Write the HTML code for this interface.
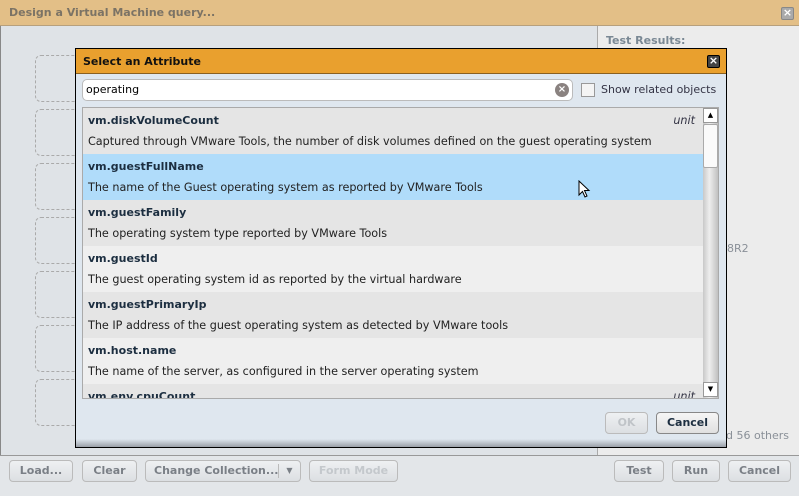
<!DOCTYPE html>
<html><head><style>
*{box-sizing:border-box;margin:0;padding:0}
body{width:799px;height:496px;position:relative;overflow:hidden;font-family:"DejaVu Sans","Liberation Sans",sans-serif;font-size:11px;background:#dfe3e7}
.a{position:absolute}
.win{left:0;top:0;width:799px;height:496px;border:1px solid #888;background:#dfe3e7}
.tb{left:0;top:0;width:799px;height:26px;background:#e3bf87;border-bottom:1px solid #b7a07d;color:#7b7365;font-weight:bold;font-size:11px;padding:6px 9px}
.x{width:13px;height:13px;border:1px solid #666;background:#ddd;border-radius:2px;font-size:11px;line-height:10px;text-align:center;color:#fff;font-weight:bold}
.right{left:597px;top:26px;width:202px;height:429px;background:#ececec;border-left:1px solid #aaa}
.dash{left:35px;width:60px;height:47px;border:1px dashed #aaa;border-radius:6px}
.bot{left:0;top:455px;width:799px;height:41px;background:#e3e6e9;border-top:1px solid #999}
.btn{height:22px;border:1px solid #bbb;border-radius:4px;background:linear-gradient(#eef0f2,#dcdfe2);color:#7a7f86;font-weight:bold;font-size:11px;text-align:center;line-height:20px}
.dlg{left:75px;top:48px;width:652px;height:400px;border:1px solid #000;background:#dfe7ef}
.dt{left:0;top:0;width:650px;height:25px;background:#e9a02e;border-bottom:1px solid #8a6020;font-weight:bold;font-size:11px;padding:6px 7px;color:#111}
.inp{left:6px;top:30px;width:491px;height:22px;background:#fff;border:1px solid #bbb;border-radius:5px;padding:3px 3px;font-size:11px}
.list{left:6px;top:58px;width:637px;height:292px;border:1px solid #aaa;overflow:hidden;background:#e5e5e5}
.row{position:absolute;left:0;width:620px;height:46px;padding:6px 5px;color:#222;font-size:11.2px}
.row b{display:block;color:#1c2e40;margin-bottom:8px;font-size:11px}
.u{position:absolute;right:8px;top:6px;font-style:italic;color:#334}
</style></head><body>
<div class="a win"></div>
<div class="a tb">Design a Virtual Machine query...</div>
<div class="a x" style="left:781px;top:7px;background:#aaa;border-color:#888">×</div>
<div class="a right"><div style="position:absolute;left:8px;top:8px;color:#7a8894;font-weight:bold;font-size:11px">Test Results:</div>
<div style="position:absolute;left:122px;top:216px;color:#8a9098">08R2</div>
<div style="position:absolute;left:128px;top:403px;color:#8a9098;font-size:11px">d 56 others</div></div>
<div class="a dash" style="top:55px"></div><div class="a dash" style="top:109px"></div><div class="a dash" style="top:163px"></div><div class="a dash" style="top:217px"></div><div class="a dash" style="top:271px"></div><div class="a dash" style="top:325px"></div><div class="a dash" style="top:379px"></div>
<div class="a bot"></div>
<div class="a btn" style="left:9px;top:460px;width:64px">Load...</div>
<div class="a btn" style="left:82px;top:460px;width:55px">Clear</div>
<div class="a btn" style="left:145px;top:460px;width:156px;text-align:left;padding-left:8px">Change Collection...<span style="position:absolute;left:132px;top:3px;height:14px;border-left:1px solid #bbb;width:22px;text-align:center;line-height:14px;font-size:8px">▼</span></div>
<div class="a btn" style="left:309px;top:460px;width:89px;color:#c4c8cc">Form Mode</div>
<div class="a btn" style="left:614px;top:460px;width:50px">Test</div>
<div class="a btn" style="left:672px;top:460px;width:48px">Run</div>
<div class="a btn" style="left:728px;top:460px;width:63px">Cancel</div>

<div class="a dlg">
<div class="a dt">Select an Attribute</div>
<div class="a x" style="left:631px;top:6px;background:#444;border-color:#000">×</div>
<div class="a inp">operating</div>
<div class="a" style="left:479px;top:34px;width:14px;height:14px;border-radius:7px;background:#8a8280;color:#fff;font-size:10px;line-height:14px;text-align:center;font-weight:bold">×</div>
<div class="a" style="left:505px;top:34px;width:14px;height:14px;border:1px solid #999;background:#f4f4f4"></div>
<div class="a" style="left:525px;top:34px;font-size:11px;color:#334">Show related objects</div>
<div class="a list">
<div class="row" style="top:0;background:#e5e5e5"><b>vm.diskVolumeCount</b>Captured through VMware Tools, the number of disk volumes defined on the guest operating system<span class="u">unit</span></div>
<div class="row" style="top:46px;background:#b0dcfa"><b>vm.guestFullName</b>The name of the Guest operating system as reported by VMware Tools</div>
<div class="row" style="top:92px;background:#e5e5e5"><b>vm.guestFamily</b>The operating system type reported by VMware Tools</div>
<div class="row" style="top:138px;background:#efefef"><b>vm.guestId</b>The guest operating system id as reported by the virtual hardware</div>
<div class="row" style="top:184px;background:#e5e5e5"><b>vm.guestPrimaryIp</b>The IP address of the guest operating system as detected by VMware tools</div>
<div class="row" style="top:230px;background:#efefef"><b>vm.host.name</b>The name of the server, as configured in the server operating system</div>
<div class="row" style="top:276px;background:#e5e5e5"><b>vm.env.cpuCount</b><span class="u">unit</span></div>
<div class="a" style="left:620px;top:0;width:16px;height:290px;background:linear-gradient(90deg,#c8c8c8,#eee 40%,#bbb)"></div>
<div class="a" style="left:620px;top:0;width:15px;height:15px;background:#fff;border:1px solid #999;font-size:7px;text-align:center;line-height:13px">▲</div>
<div class="a" style="left:620px;top:16px;width:15px;height:44px;background:#fafafa;border:1px solid #aaa;border-radius:2px"></div>
<div class="a" style="left:620px;top:274px;width:15px;height:15px;background:#fff;border:1px solid #999;font-size:7px;text-align:center;line-height:13px">▼</div>
</div>
<svg class="a" style="left:502px;top:131px" width="13" height="20"><path d="M1 1 L1 15 L4.5 11.5 L7 17 L9 16 L6.5 10.5 L11 10.5 Z" fill="#fff" stroke="#000" stroke-width="1"/></svg>
<div class="a btn" style="left:529px;top:363px;width:43px;color:#c0c4c8">OK</div>
<div class="a btn" style="left:580px;top:363px;width:63px;color:#1c2e40;border-color:#888;background:linear-gradient(#f6f6f6,#e0e0e0)">Cancel</div>
<div class="a" style="left:0;top:390px;width:650px;height:8px;background:linear-gradient(#dfe7ef,#9aa0a8)"></div>
</div>
</body></html>
